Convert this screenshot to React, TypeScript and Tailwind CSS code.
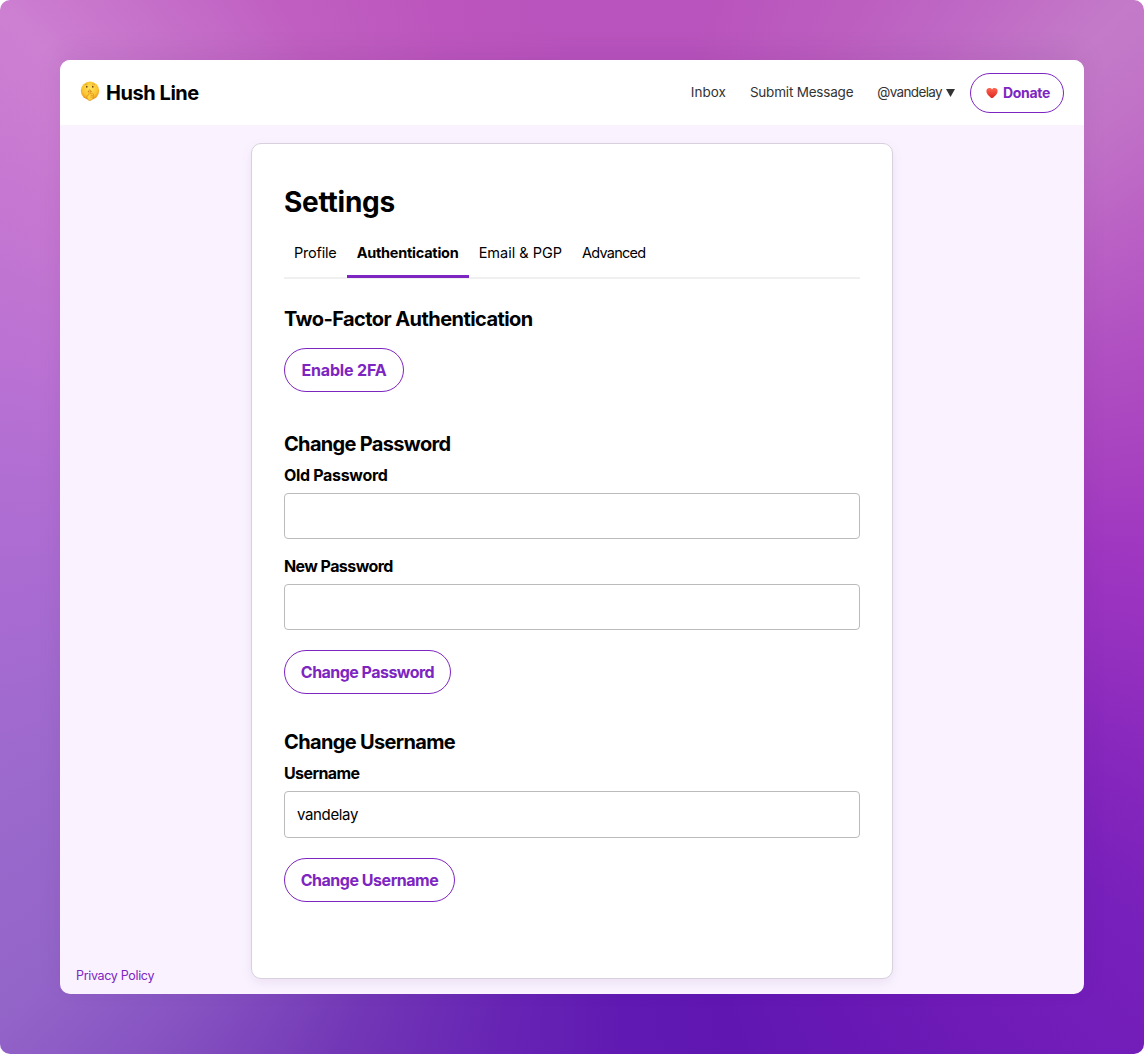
import React from "react";

const outline =
  "flex items-center justify-center rounded-full border border-[#7d25c1] font-bold text-[#7d25c1]";

function PillButton({ children, className }: { children: React.ReactNode; className: string }) {
  return <button className={`${outline} h-11 text-base leading-none whitespace-nowrap ${className}`}>{children}</button>;
}

function ShushFace() {
  return (
    <svg viewBox="0 0 20 20" className="-mt-[3px] h-5 w-5 shrink-0" aria-hidden="true">
      <defs>
        <radialGradient id="face" cx="50%" cy="38%" r="62%">
          <stop offset="0" stopColor="#ffe45e" />
          <stop offset="0.65" stopColor="#fbc531" />
          <stop offset="1" stopColor="#e8901c" />
        </radialGradient>
      </defs>
      <circle cx="10" cy="9.8" r="9.2" fill="url(#face)" />
      <ellipse cx="6.8" cy="5.8" rx="0.8" ry="1" fill="#6b3f12" />
      <ellipse cx="12.8" cy="5.8" rx="0.8" ry="1" fill="#6b3f12" />
      <path d="M4.8 3.8Q6 2.7 7.5 3.2M12.2 3.2Q13.8 2.7 15 3.8" fill="none" stroke="#c98a22" strokeWidth="0.5" />
      <path d="M7.8 10.6Q9.6 9.4 11.6 10.6" fill="none" stroke="#b56b1a" strokeWidth="0.9" />
      <path
        d="M9 9.2Q9.8 8 10.5 9.2L10.7 13L12.8 12.6Q14 13 13.5 14.3L12.8 17.5Q11.5 20 9 19.4Q6.9 18.4 6.9 16.3Q6.8 14.3 9 13.6Z"
        fill="#ffd33f"
        stroke="#dd8b1b"
        strokeWidth="0.7"
      />
      <path d="M10.5 14.7L13 14.5M10.4 16.2L12.8 16" stroke="#d48618" strokeWidth="0.6" />
    </svg>
  );
}

function Heart() {
  return (
    <svg viewBox="0 0 12 12" className="h-3 w-3 shrink-0" aria-hidden="true">
      <defs>
        <linearGradient id="heart" x1="0" y1="0" x2="0" y2="1">
          <stop offset="0" stopColor="#ff6550" />
          <stop offset="1" stopColor="#dc251f" />
        </linearGradient>
      </defs>
      <path d="M6 11.3C3.5 9.4.4 7 .4 3.9.4.8 4.5-.1 6 2.5 7.5-.1 11.6.8 11.6 3.9 11.6 7 8.5 9.4 6 11.3Z" fill="url(#heart)" />
    </svg>
  );
}

type FieldProps = { label: string; value: string; type: string; labelClass: string; inputClass: string };

function Field({ label, value, type, labelClass, inputClass }: FieldProps) {
  return (
    <label className="block text-base leading-[22px] font-bold">
      <span className={`whitespace-nowrap ${labelClass}`}>{label}</span>
      <input
        type={type}
        defaultValue={value}
        className={`mt-[7px] block w-full rounded-[4px] border border-[#bbbbbb] bg-white px-3 text-[15px] font-normal tracking-[-0.35px] outline-none ${inputClass}`}
      />
    </label>
  );
}

export default function App() {
  return (
    <div className="h-[1054px] w-[1144px] overflow-hidden bg-white font-['Inter',sans-serif] text-black">
      <div className="h-full overflow-hidden rounded-[10px] bg-[conic-gradient(from_0deg_at_50%_50%,#b953bd_0deg,#b953bd_14deg,#bc5ec0_29deg,#bf69c5_38deg,#c47ac8_47deg,#c173c7_53deg,#bb62c5_61deg,#b050c2_72deg,#a944c0_82deg,#a037c1_92deg,#9430bf_103deg,#8828bd_112deg,#7820bb_125deg,#711cb9_137deg,#6818b4_150deg,#6017b2_162deg,#6019b2_174deg,#6724b4_188deg,#7237b6_204deg,#8450c0_217deg,#9465c9_230deg,#9b69cc_244deg,#a86bd1_262deg,#b770d3_283deg,#c677d1_301deg,#cd80d2_312deg,#c56fc9_321deg,#c05fc1_331deg,#bc56be_345deg,#b953bd_360deg)] p-[60px]">
        <div className="flex h-[934px] w-[1024px] flex-col overflow-hidden rounded-[10px] bg-[#faf3ff] shadow-[0_-8px_24px_rgba(70,0,90,0.08)]">
          <header className="flex h-[65px] shrink-0 items-center justify-between bg-white px-5">
            <div className="flex items-center gap-1.5 text-xl font-bold tracking-[-0.45px]">
              <ShushFace />
              <span>Hush Line</span>
            </div>
            <nav className="flex items-center text-[13.5px] text-[#333333]">
              <a className="mr-6">Inbox</a>
              <a className="mr-6 tracking-[-0.2px]">Submit Message</a>
              <a className="mr-[15px] flex items-center gap-1">
                <span className="tracking-[-0.65px]">@vandelay</span>
                <svg viewBox="0 0 9 8" className="h-2 w-[9px]"><path d="M0 0H9L4.5 8Z" fill="#333" /></svg>
              </a>
              <a className={`${outline} h-10 w-[94px] gap-[5px] pl-0.5 text-sm tracking-[-0.35px]`}>
                <Heart />
                <span>Donate</span>
              </a>
            </nav>
          </header>
          <div className="flex min-h-0 flex-1 items-end">
            <a className="mb-2 ml-4 w-[175px] text-[12.5px] tracking-[-0.33px] text-[#7d25c1]">Privacy Policy</a>
            <main className="mb-[15px] h-[836px] w-[642px] rounded-[10px] border border-[#d8d0dd] bg-white px-8 shadow-[0_4px_12px_rgba(80,0,100,0.08)]">
              <h1 className="mt-10 text-[28px] leading-9 font-bold tracking-[-0.25px]">Settings</h1>
              <div className="mt-[14px] flex h-[45px] border-b-2 border-[#f0f0f0] text-[14.5px]">
                <a className="px-[10px] pt-2 tracking-[-0.2px]">Profile</a>
                <a className="h-[44px] w-[122px] border-b-[3px] border-[#7d25c1] px-[10px] pt-2 font-bold tracking-[-0.25px]">Authentication</a>
                <a className="px-[10px] pt-2">Email &amp; PGP</a>
                <a className="px-[10px] pt-2 tracking-[-0.75px]">Advanced</a>
              </div>
              <h2 className="mt-[26px] text-xl leading-7 font-bold tracking-[-0.57px]">Two-Factor Authentication</h2>
              <PillButton className="mt-[15px] w-[120px] tracking-[-0.15px]">Enable 2FA</PillButton>
              <h2 className="mt-[38px] text-xl leading-7 font-bold tracking-[-0.68px]">Change Password</h2>
              <div className="mt-[6px]">
                <Field label="Old Password" value="" type="password" labelClass="tracking-[-0.32px]" inputClass="h-[46px]" />
              </div>
              <div className="mt-4">
                <Field label="New Password" value="" type="password" labelClass="tracking-[-0.58px]" inputClass="h-[46px]" />
              </div>
              <PillButton className="mt-5 w-[167px] tracking-[-0.53px]">Change Password</PillButton>
              <h2 className="mt-[34px] text-xl leading-7 font-bold tracking-[-0.65px]">Change Username</h2>
              <div className="mt-[6px]">
                <Field label="Username" value="vandelay" type="text" labelClass="tracking-[-0.6px]" inputClass="h-[47px]" />
              </div>
              <PillButton className="mt-5 w-[171px] tracking-[-0.47px]">Change Username</PillButton>
            </main>
          </div>
        </div>
      </div>
    </div>
  );
}
